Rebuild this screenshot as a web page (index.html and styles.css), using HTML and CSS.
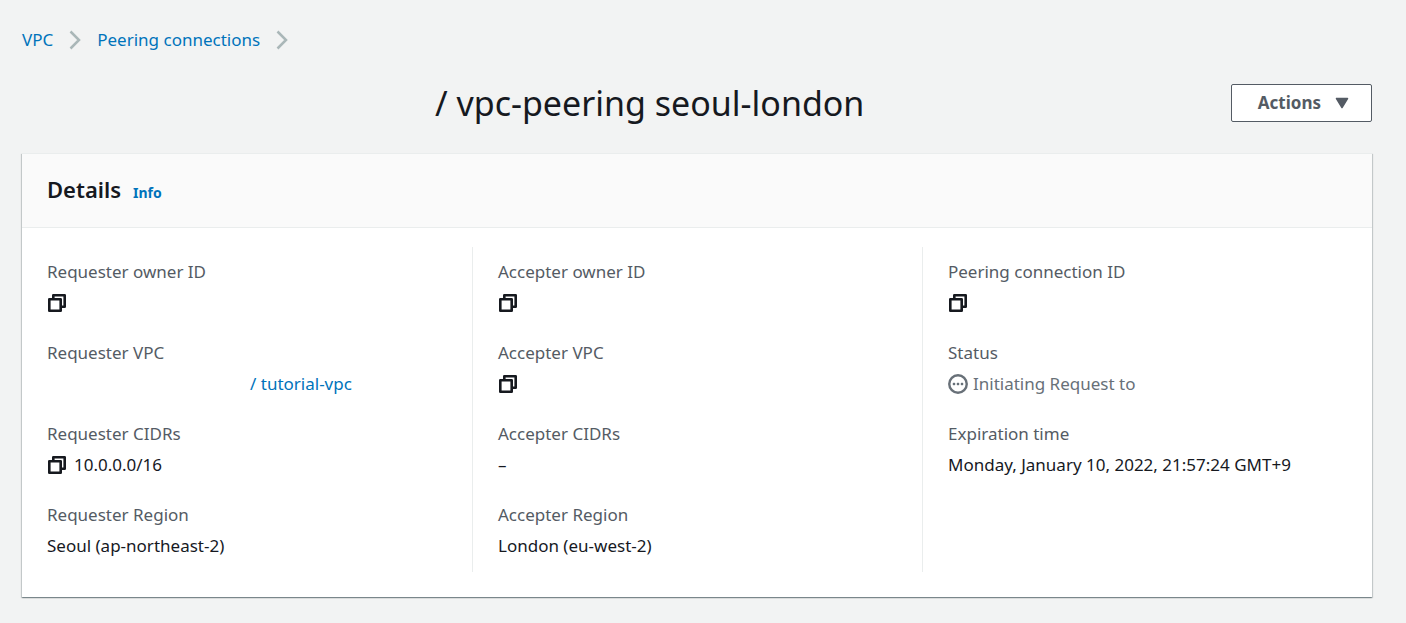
FILE: index.html
```html
<!DOCTYPE html>
<html lang="en">
<head>
<meta charset="utf-8">
<title>Peering connection details</title>
<link rel="stylesheet" href="styles.css">
</head>
<body>
<svg class="defs" aria-hidden="true">
  <symbol id="copy" viewBox="0 0 20 18"><path d="M6.300 5V1.300H17.700V12.700H14M2.300 5.300H13.700V16.700H2.300z" fill="none" stroke="currentColor" stroke-width="2.600" stroke-linejoin="round"/></symbol>
  <symbol id="chevron" viewBox="0 0 12 20"><path d="M1.500 1.500L10 10l-8.500 8.500" fill="none" stroke="currentColor" stroke-width="2.500"/></symbol>
</svg>
<main class="page">
  <nav class="crumbs" aria-label="Breadcrumbs">
    <a href="#vpc">VPC</a>
    <svg class="chevron"><use href="#chevron"/></svg>
    <a href="#peering">Peering connections</a>
    <svg class="chevron"><use href="#chevron"/></svg>
  </nav>
  <header class="top">
    <h1 class="title">/ vpc-peering seoul-london</h1>
    <button class="actions" type="button">Actions
      <svg class="caret" viewBox="0 0 14 12"><path d="M1.500 1.500h11L7 10.500z" fill="currentColor" stroke="currentColor" stroke-width="1.500" stroke-linejoin="round"/></svg>
    </button>
  </header>
  <section class="card">
    <div class="card-head">
      <h2 class="card-title">Details</h2>
      <a class="info" href="#info">Info</a>
    </div>
    <div class="columns">
      <dl class="column">
        <div><dt>Requester owner ID</dt><dd><button class="copy" type="button" aria-label="Copy requester owner ID"><svg><use href="#copy"/></svg></button></dd></div>
        <div><dt>Requester VPC</dt><dd><a class="vpc-link" href="#tutorial-vpc">/ tutorial-vpc</a></dd></div>
        <div><dt>Requester CIDRs</dt><dd><button class="copy" type="button" aria-label="Copy requester CIDR"><svg><use href="#copy"/></svg></button>10.0.0.0/16</dd></div>
        <div><dt>Requester Region</dt><dd>Seoul (ap-northeast-2)</dd></div>
      </dl>
      <dl class="column">
        <div><dt>Accepter owner ID</dt><dd><button class="copy" type="button" aria-label="Copy accepter owner ID"><svg><use href="#copy"/></svg></button></dd></div>
        <div><dt>Accepter VPC</dt><dd><button class="copy" type="button" aria-label="Copy accepter VPC"><svg><use href="#copy"/></svg></button></dd></div>
        <div><dt>Accepter CIDRs</dt><dd>–</dd></div>
        <div><dt>Accepter Region</dt><dd>London (eu-west-2)</dd></div>
      </dl>
      <dl class="column">
        <div><dt>Peering connection ID</dt><dd><button class="copy" type="button" aria-label="Copy peering connection ID"><svg><use href="#copy"/></svg></button></dd></div>
        <div><dt>Status</dt><dd class="status"><svg class="pending" viewBox="0 0 20 20"><circle cx="10" cy="10" r="8.750" fill="none" stroke="currentColor" stroke-width="2.400"/><path d="M5 9h2v2H5zM9 9h2v2H9zM13 9h2v2h-2z" fill="currentColor" stroke="currentColor" stroke-width=".4"/></svg>Initiating Request to</dd></div>
        <div><dt>Expiration time</dt><dd>Monday, January 10, 2022, 21:57:24 GMT+9</dd></div>
      </dl>
    </div>
  </section>
</main>
</body>
</html>
```
FILE: styles.css
```css
* { box-sizing: border-box; }
body {
  margin: 0;
  background: #f2f3f3;
  color: #16191f;
  font: 17px/27px "Noto Sans", sans-serif;
}
.defs { position: absolute; width: 0; height: 0; }
a { color: #0073bb; text-decoration: none; }
a:hover { text-decoration: underline; }
button { font: inherit; cursor: pointer; }
.page { padding: 26px 34px 25px 22px; }
.crumbs { display: flex; align-items: center; gap: 16px; }
.chevron { width: 12px; height: 20px; color: #aab7b8; }
.top {
  display: flex;
  align-items: center;
  justify-content: space-between;
  margin: 26px 0;
}
.title {
  margin: 0;
  padding-left: 413px;
  font-size: 34px;
  line-height: 48px;
  font-weight: 400;
}
.actions {
  display: flex;
  align-items: center;
  gap: 14px;
  height: 38px;
  padding: 0 22px 0 26px;
  background: #fff;
  border: 1px solid #545b64;
  border-radius: 2px;
  color: #545b64;
  font-weight: 700;
  line-height: 26px;
}
.caret { width: 14px; height: 12px; }
.card {
  background: #fff;
  border-top: 1px solid #eaeded;
  box-shadow: 0 1px 1px 0 rgba(0, 28, 36, 0.3), 1px 1px 1px 0 rgba(0, 28, 36, 0.15), -1px 1px 1px 0 rgba(0, 28, 36, 0.15);
}
.card-head {
  display: flex;
  align-items: baseline;
  gap: 12px;
  padding: 19px 25px 21px;
  background: #fafafa;
  border-bottom: 1px solid #eaeded;
}
.card-title { margin: 0; font-size: 22px; line-height: 33px; font-weight: 600; }
.info { font-size: 14px; line-height: 20px; font-weight: 700; }
.columns {
  display: grid;
  grid-template-columns: repeat(3, 1fr);
  padding: 19px 0 25px;
}
.column {
  display: flex;
  flex-direction: column;
  gap: 23px;
  margin: 0;
  padding: 11px 25px 13px;
}
.column + .column { border-left: 1px solid #eaeded; }
dt { color: #545b64; }
dd { display: flex; align-items: center; gap: 7px; min-height: 27px; margin: 4px 0 0; }
.copy { padding: 0; border: 0; background: none; color: #16191f; display: flex; }
.copy svg { width: 20px; height: 18px; }
.vpc-link { padding-left: 203px; }
.status { gap: 5px; color: #687078; }
.pending { width: 20px; height: 20px; }
```
